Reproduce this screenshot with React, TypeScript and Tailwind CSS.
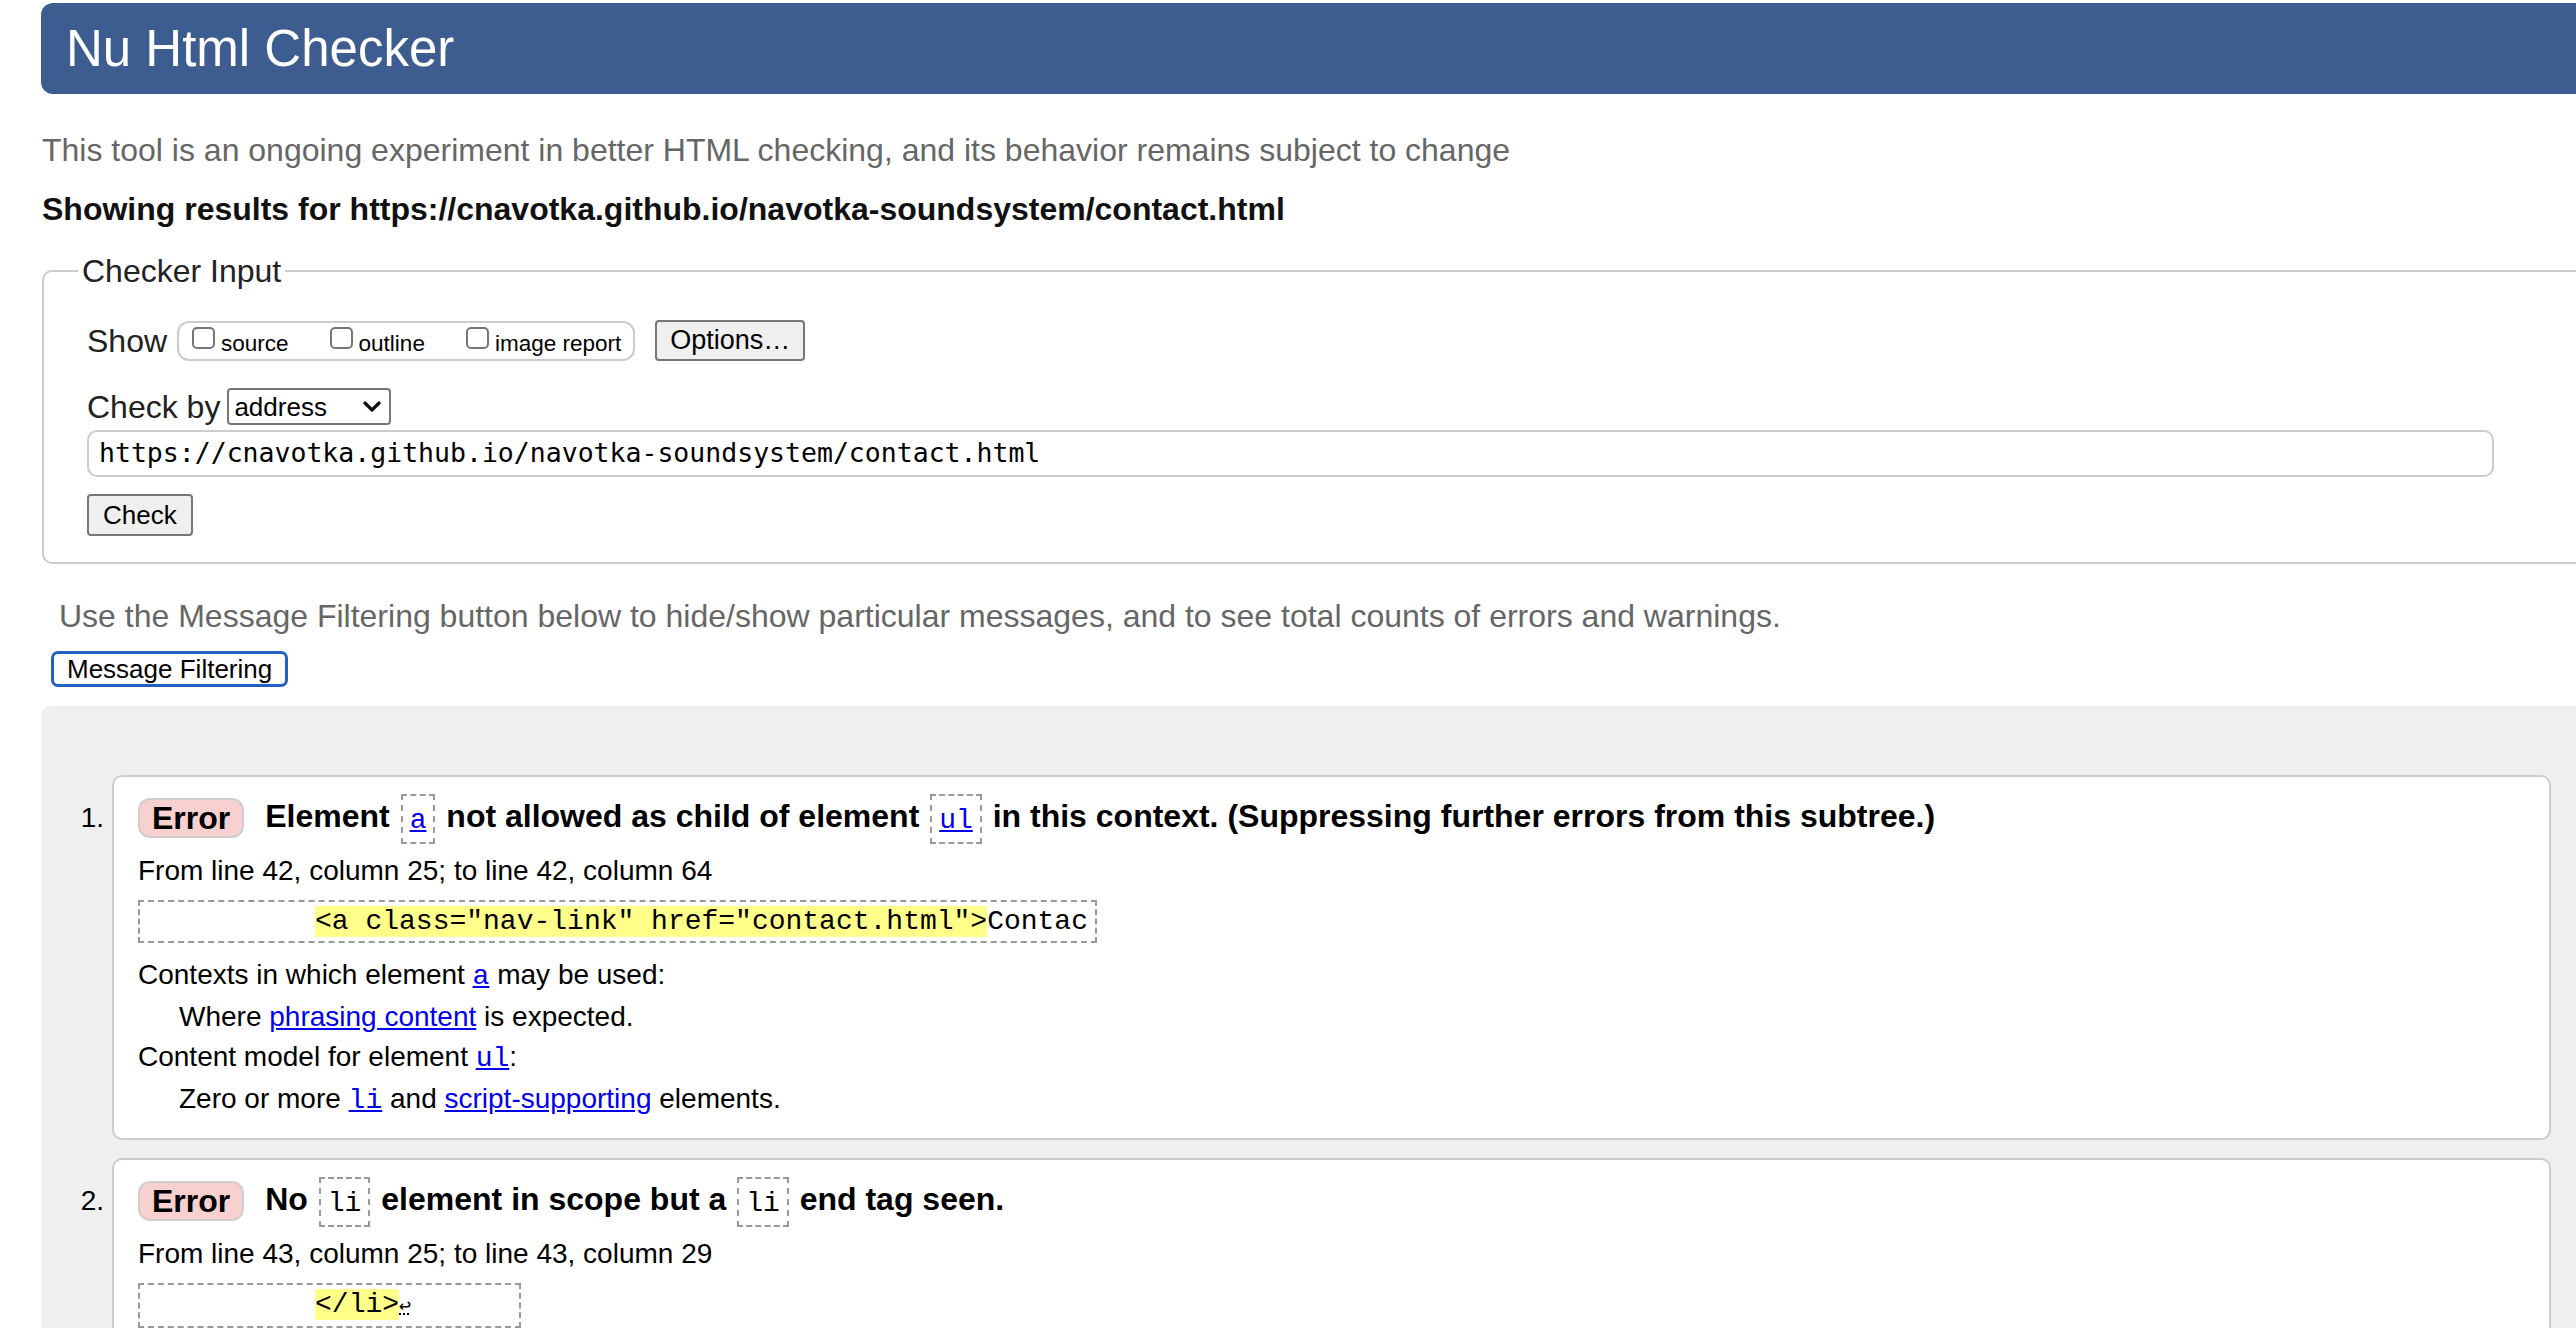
import React from "react";

const sans = "font-['Liberation_Sans',Arial,Helvetica,sans-serif]";
const mono = "font-['Liberation_Mono','Courier_New',monospace]";

function CodeBox({ children, link = false }: { children: React.ReactNode; link?: boolean }) {
  return (
    <span className="inline-block align-middle border-2 border-dashed border-[#999] px-[7px] leading-[43px] mx-[2px]">
      <code
        className={`${mono} text-[28px] font-normal ${link ? "text-[#0000ee] underline" : "text-black"}`}
      >
        {children}
      </code>
    </span>
  );
}

function Badge() {
  return (
    <span className="inline-flex items-center h-[40px] px-[12px] rounded-[12px] bg-[#f8d0d0] border-2 border-[#cfcfcf] text-[32px] font-bold leading-none text-black">
      Error
    </span>
  );
}

function Checkbox({ label }: { label: string }) {
  return (
    <label className="flex items-end">
      <input
        type="checkbox"
        className="appearance-none w-[23px] h-[22px] border-2 border-[#767676] rounded-[5px] bg-white mb-[10px] mr-[6px]"
      />
      <span className="text-[22.5px] leading-[30px] text-black">{label}</span>
    </label>
  );
}

export default function App() {
  return (
    <div className={`${sans} w-full h-[1328px] overflow-hidden bg-white text-black`}>
      {/* Header */}
      <div className="ml-[41px] mt-[3px] h-[91px] bg-[#3d5c8f] rounded-l-[12px] flex items-center pl-[25px]">
        <h1 className="text-[51px] leading-none text-white font-normal">Nu Html Checker</h1>
      </div>

      <p className="mt-[37px] ml-[42px] text-[32px] leading-[38px] text-[#666]">
        This tool is an ongoing experiment in better HTML checking, and its behavior remains subject to change
      </p>

      <p className="mt-[21px] ml-[42px] text-[32px] leading-[38px] font-bold text-[#111]">
        Showing results for https://cnavotka.github.io/navotka-soundsystem/contact.html
      </p>

      {/* Checker input fieldset */}
      <fieldset className="mt-[24px] ml-[42px] mr-[-20px] border-2 border-[#ccc] rounded-l-[10px] pl-[43px] pt-[30px] pb-[26px]">
        <legend className="ml-[-9px] px-[4px] text-[32px] leading-[38px] text-[#222]">Checker Input</legend>

        <div className="flex items-center h-[41px]">
          <span className="text-[32px] leading-[38px] text-[#222]">Show</span>
          <div className="ml-[10px] h-[40px] border-2 border-[#ccc] rounded-[12px] flex items-end gap-[41px] pl-[13px] pr-[12px]">
            <Checkbox label="source" />
            <Checkbox label="outline" />
            <Checkbox label="image report" />
          </div>
          <button className="ml-[20px] h-[41px] px-[13px] bg-[#efefef] border-2 border-[#767676] rounded-[4px] text-[27px] leading-none text-black">
            Options…
          </button>
        </div>

        <div className="mt-[27px] flex items-center h-[37px]">
          <span className="text-[32px] leading-[38px] text-[#222]">Check by</span>
          <div className="ml-[7px] w-[164px] h-[37px] border-2 border-[#767676] rounded-[4px] bg-white flex items-center justify-between pl-[5px] pr-[8px]">
            <span className="text-[26px] leading-none text-black">address</span>
            <svg width="18" height="12" viewBox="0 0 18 12">
              <polyline points="2,2 9,9 16,2" fill="none" stroke="#111" strokeWidth="3.2" strokeLinecap="round" strokeLinejoin="round" />
            </svg>
          </div>
        </div>

        <div className="mt-[5px] mr-[100px] h-[47px] border-2 border-[#ccc] rounded-[10px] flex items-center pl-[10px]">
          <span className="font-['DejaVu_Sans_Mono',Menlo,monospace] text-[26.5px] leading-none text-black">
            https://cnavotka.github.io/navotka-soundsystem/contact.html
          </span>
        </div>

        <div className="mt-[17px]">
          <button className="h-[42px] px-[14px] bg-[#efefef] border-2 border-[#767676] rounded-[4px] text-[26px] leading-none text-black">
            Check
          </button>
        </div>
      </fieldset>

      <p className="mt-[33px] ml-[59px] text-[32px] leading-[38px] text-[#666]">
        Use the Message Filtering button below to hide/show particular messages, and to see total counts of errors and warnings.
      </p>

      <div className="mt-[16px] ml-[51px]">
        <button className="h-[36px] px-[13px] bg-white border-[3px] border-[#2160c4] rounded-[7px] text-[26px] leading-none text-black">
          Message Filtering
        </button>
      </div>

      {/* Results */}
      <div className="mt-[19px] ml-[41px] bg-[#efefef] rounded-tl-[10px] pt-[69px] pr-[25px] pb-[40px]">
        <ol className="flex flex-col gap-[18px]">
          <li className="flex">
            <span className="w-[71px] shrink-0 text-right pr-[8px] pt-[26px] text-[28px] leading-[34px]">1.</span>
            <div className="flex-1 bg-white border-2 border-[#ccc] rounded-[10px] pl-[24px] pt-[17px] pb-[17px]">
              <div className="flex items-center h-[48px]">
                <Badge />
                <span className="ml-[21px] text-[32px] font-bold leading-[48px] whitespace-nowrap">
                  Element <CodeBox link>a</CodeBox> not allowed as child of element <CodeBox link>ul</CodeBox> in this
                  context. (Suppressing further errors from this subtree.)
                </span>
              </div>
              <p className="mt-[12px] text-[28px] leading-[34px]">From line 42, column 25; to line 42, column 64</p>
              <div className="mt-[12px]">
                <code className={`${mono} inline-block border-2 border-dashed border-[#999] px-[7px] py-[3px] text-[28px] leading-[33px] whitespace-pre text-black`}>
                  {"          "}
                  <mark className="bg-[#ffff8a] text-black">{'<a class="nav-link" href="contact.html">'}</mark>
                  {"Contac"}
                </code>
              </div>
              <dl className="mt-[12px] text-[28px] leading-[40px]">
                <dt>
                  Contexts in which element{" "}
                  <a className={`${mono} text-[#0000ee] underline`}>a</a> may be used:
                </dt>
                <dd className="pl-[41px]">
                  Where <a className="text-[#0000ee] underline">phrasing content</a> is expected.
                </dd>
                <dt>
                  Content model for element <a className={`${mono} text-[#0000ee] underline`}>ul</a>:
                </dt>
                <dd className="pl-[41px]">
                  Zero or more <a className={`${mono} text-[#0000ee] underline`}>li</a> and{" "}
                  <a className="text-[#0000ee] underline">script-supporting</a> elements.
                </dd>
              </dl>
            </div>
          </li>

          <li className="flex">
            <span className="w-[71px] shrink-0 text-right pr-[8px] pt-[26px] text-[28px] leading-[34px]">2.</span>
            <div className="flex-1 bg-white border-2 border-[#ccc] rounded-[10px] pl-[24px] pt-[17px] pb-[17px]">
              <div className="flex items-center h-[48px]">
                <Badge />
                <span className="ml-[21px] text-[32px] font-bold leading-[48px] whitespace-nowrap">
                  No <CodeBox>li</CodeBox> element in scope but a <CodeBox>li</CodeBox> end tag seen.
                </span>
              </div>
              <p className="mt-[12px] text-[28px] leading-[34px]">From line 43, column 25; to line 43, column 29</p>
              <div className="mt-[12px]">
                <code className={`${mono} inline-block border-2 border-dashed border-[#999] px-[7px] py-[3px] text-[28px] leading-[33px] whitespace-pre text-black`}>
                  {"          "}
                  <mark className="bg-[#ffff8a] text-black">{"</li>"}</mark>
                  <span className="text-[20px] underline decoration-dotted">{"↩"}</span>
                  {"      "}
                </code>
              </div>
              <dl className="mt-[12px] text-[28px] leading-[40px]">
                <dt>
                  Contexts in which element <a className={`${mono} text-[#0000ee] underline`}>li</a> may be used:
                </dt>
              </dl>
            </div>
          </li>
        </ol>
      </div>
    </div>
  );
}
